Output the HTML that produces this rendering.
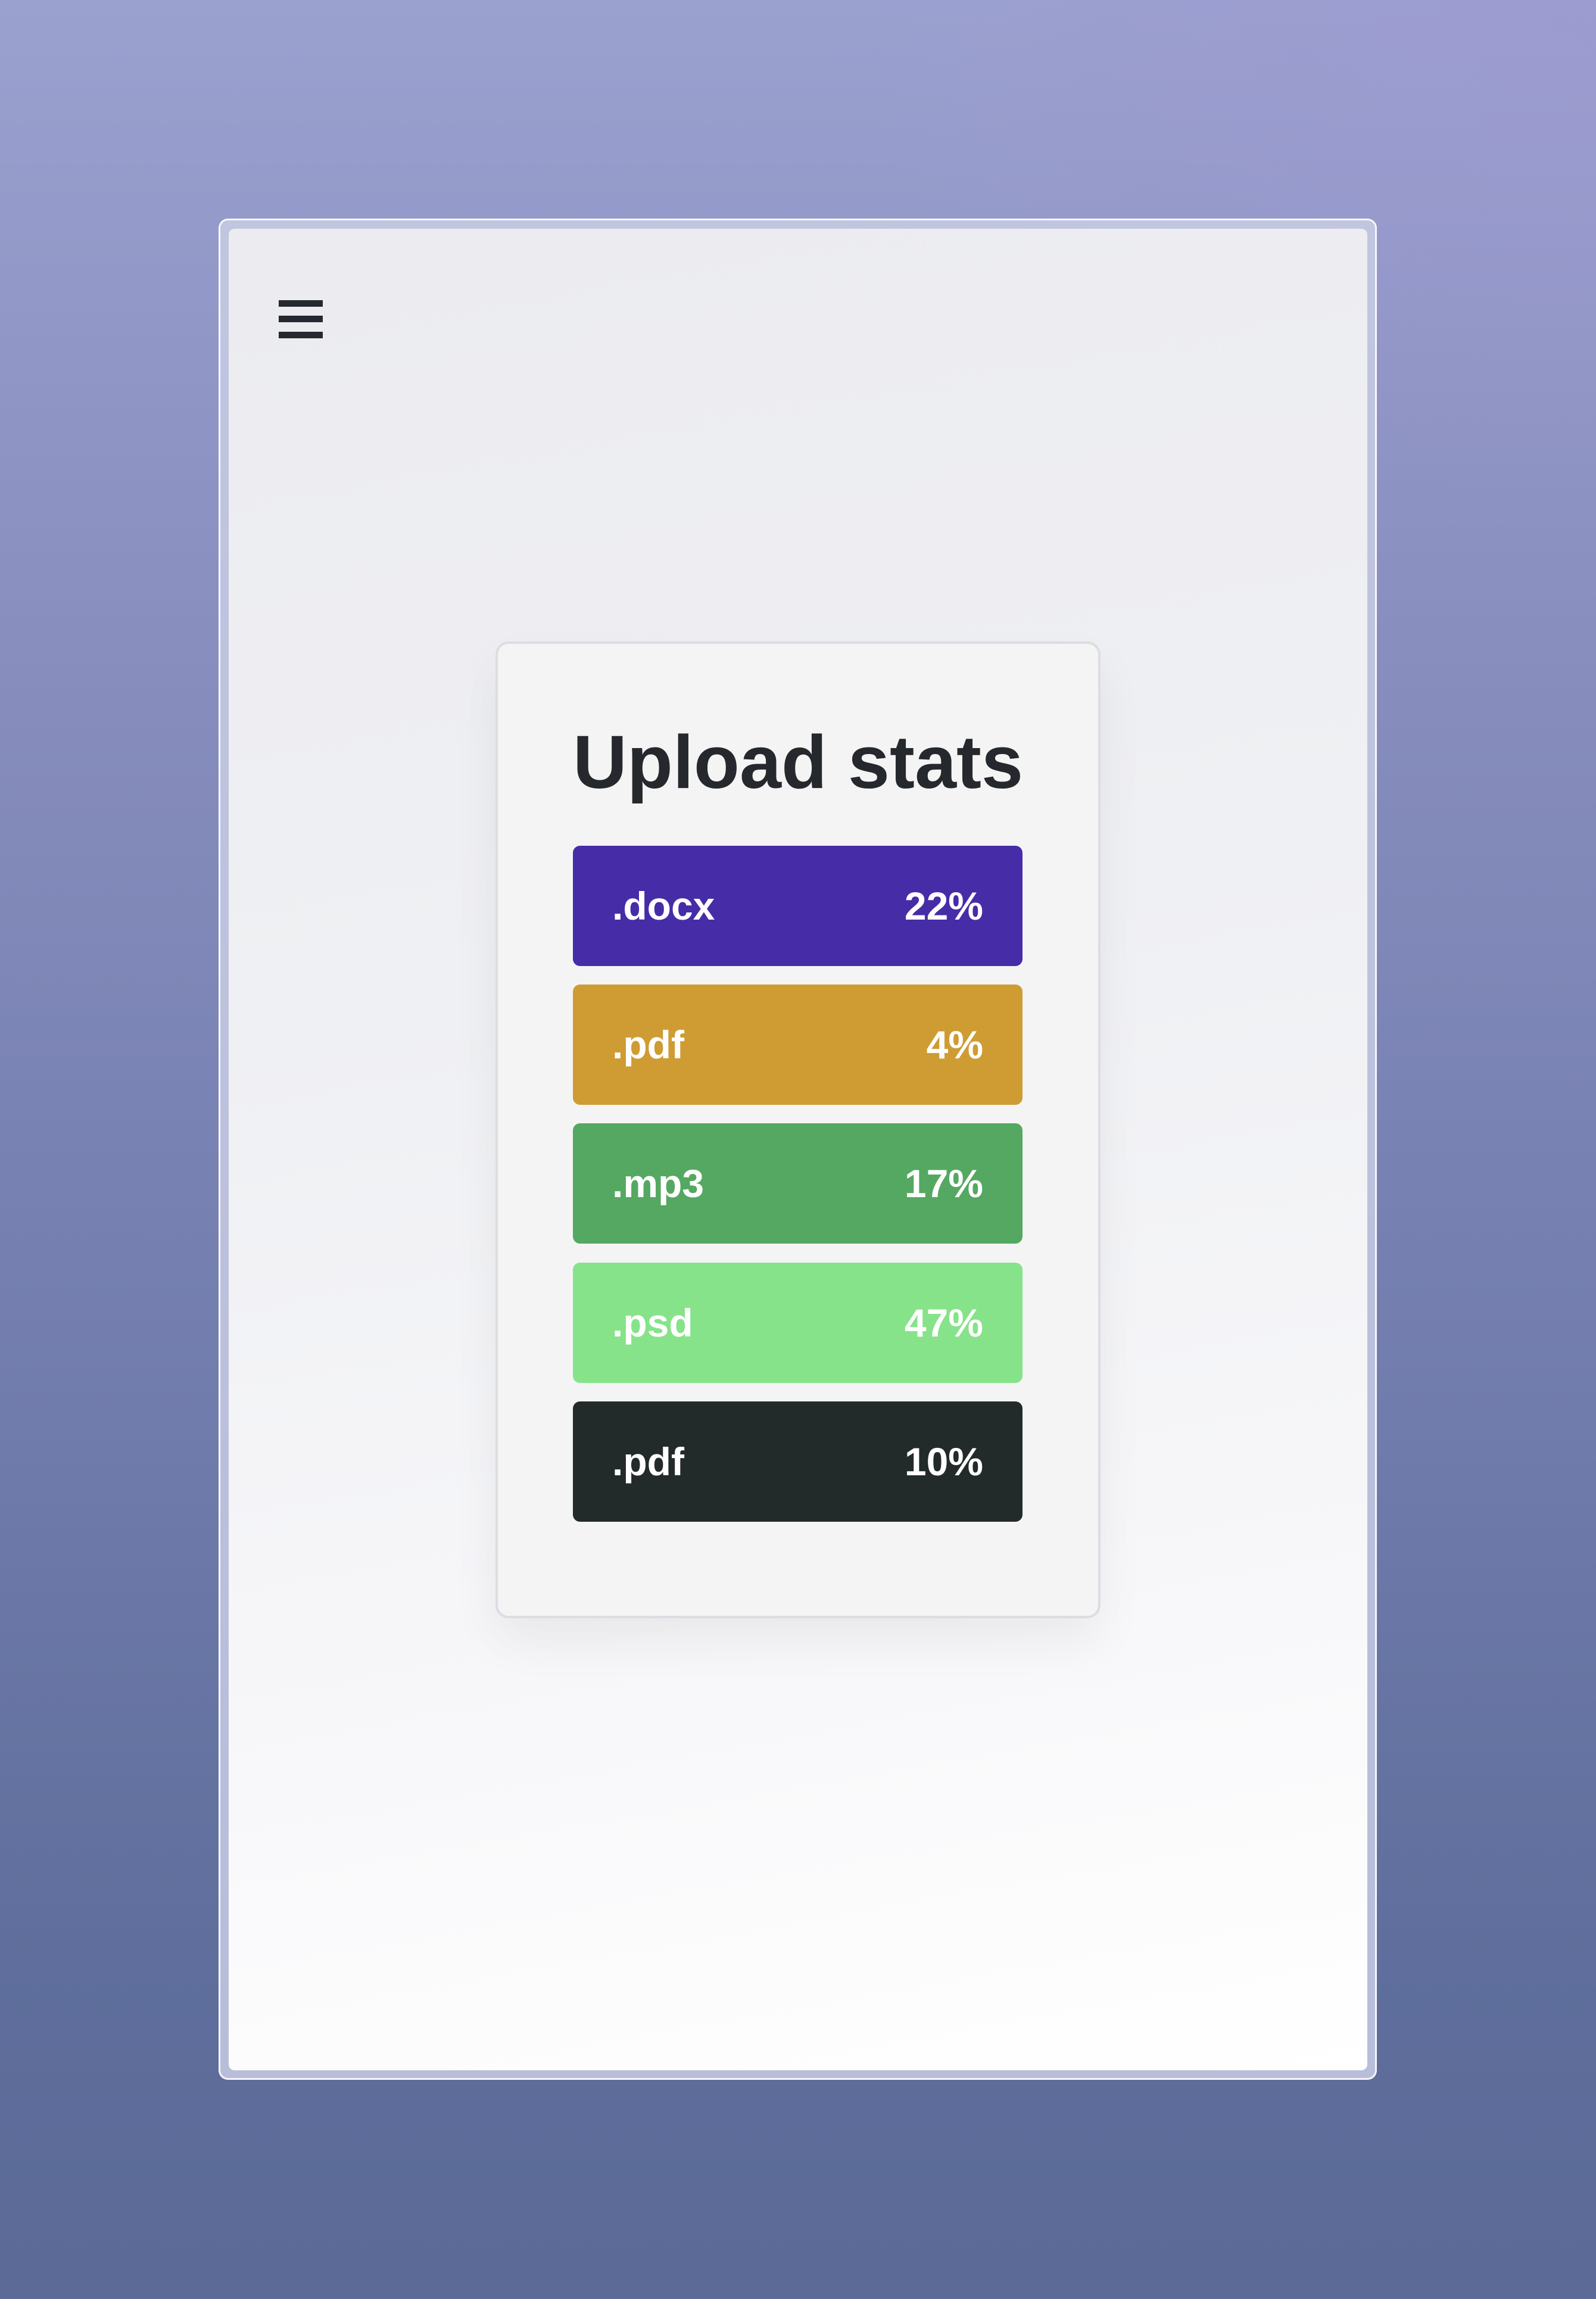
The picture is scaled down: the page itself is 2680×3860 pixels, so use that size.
<!DOCTYPE html>
<html><head><meta charset="utf-8"><style>
html,body{margin:0;padding:0}
body{width:2680px;height:3860px;position:relative;overflow:hidden;
background:radial-gradient(ellipse 1800px 1200px at 2680px 0px,rgba(160,150,210,0.5),rgba(160,150,210,0) 70%),linear-gradient(180deg,#9aa1cf 0%,#8a90c0 25%,#7580b0 55%,#5f6e9c 85%,#5b6a97 100%);
font-family:"Liberation Sans",sans-serif}
.frame{position:absolute;left:367px;top:367px;width:1945px;height:3125px;box-sizing:border-box;
border-radius:16px;background:rgba(200,204,228,0.85);box-shadow:inset 0 0 0 3px rgba(255,255,255,0.85)}
.panel{position:absolute;left:384px;top:384px;width:1912px;height:3092px;border-radius:10px;
background:linear-gradient(170deg,#ececf0 0%,#eff0f3 40%,#f6f6f9 70%,#ffffff 100%)}
.ham{position:absolute;left:468px;width:74px;height:11px;background:#25282e}
.card{position:absolute;left:832px;top:1077px;width:1016px;height:1640px;box-sizing:border-box;
border:4px solid #dcdde2;border-radius:22px;background:#f4f4f5;box-shadow:0 40px 80px rgba(0,0,0,0.06)}
h1{position:absolute;left:832px;width:1016px;top:1205px;margin:0;text-align:center;font-size:126px;line-height:150px;color:#25282c;font-weight:bold}
.bar{position:absolute;left:962px;width:755px;height:202px;border-radius:12px;color:#fff;font-weight:bold;font-size:66px;line-height:202px;box-sizing:border-box;padding:0 66px}
.bar span{float:right}
</style></head><body>
<div class="frame"></div>
<div class="panel"></div>
<div class="ham" style="top:504px"></div>
<div class="ham" style="top:530px"></div>
<div class="ham" style="top:557px"></div>
<div class="card"></div>
<h1>Upload stats</h1>
<div class="bar" style="top:1420px;background:#472ca8">.docx<span>22%</span></div>
<div class="bar" style="top:1653px;background:#cf9c33">.pdf<span>4%</span></div>
<div class="bar" style="top:1886px;background:#55a861">.mp3<span>17%</span></div>
<div class="bar" style="top:2120px;background:#86e389">.psd<span>47%</span></div>
<div class="bar" style="top:2353px;background:#232b2a">.pdf<span>10%</span></div>
</body></html>
